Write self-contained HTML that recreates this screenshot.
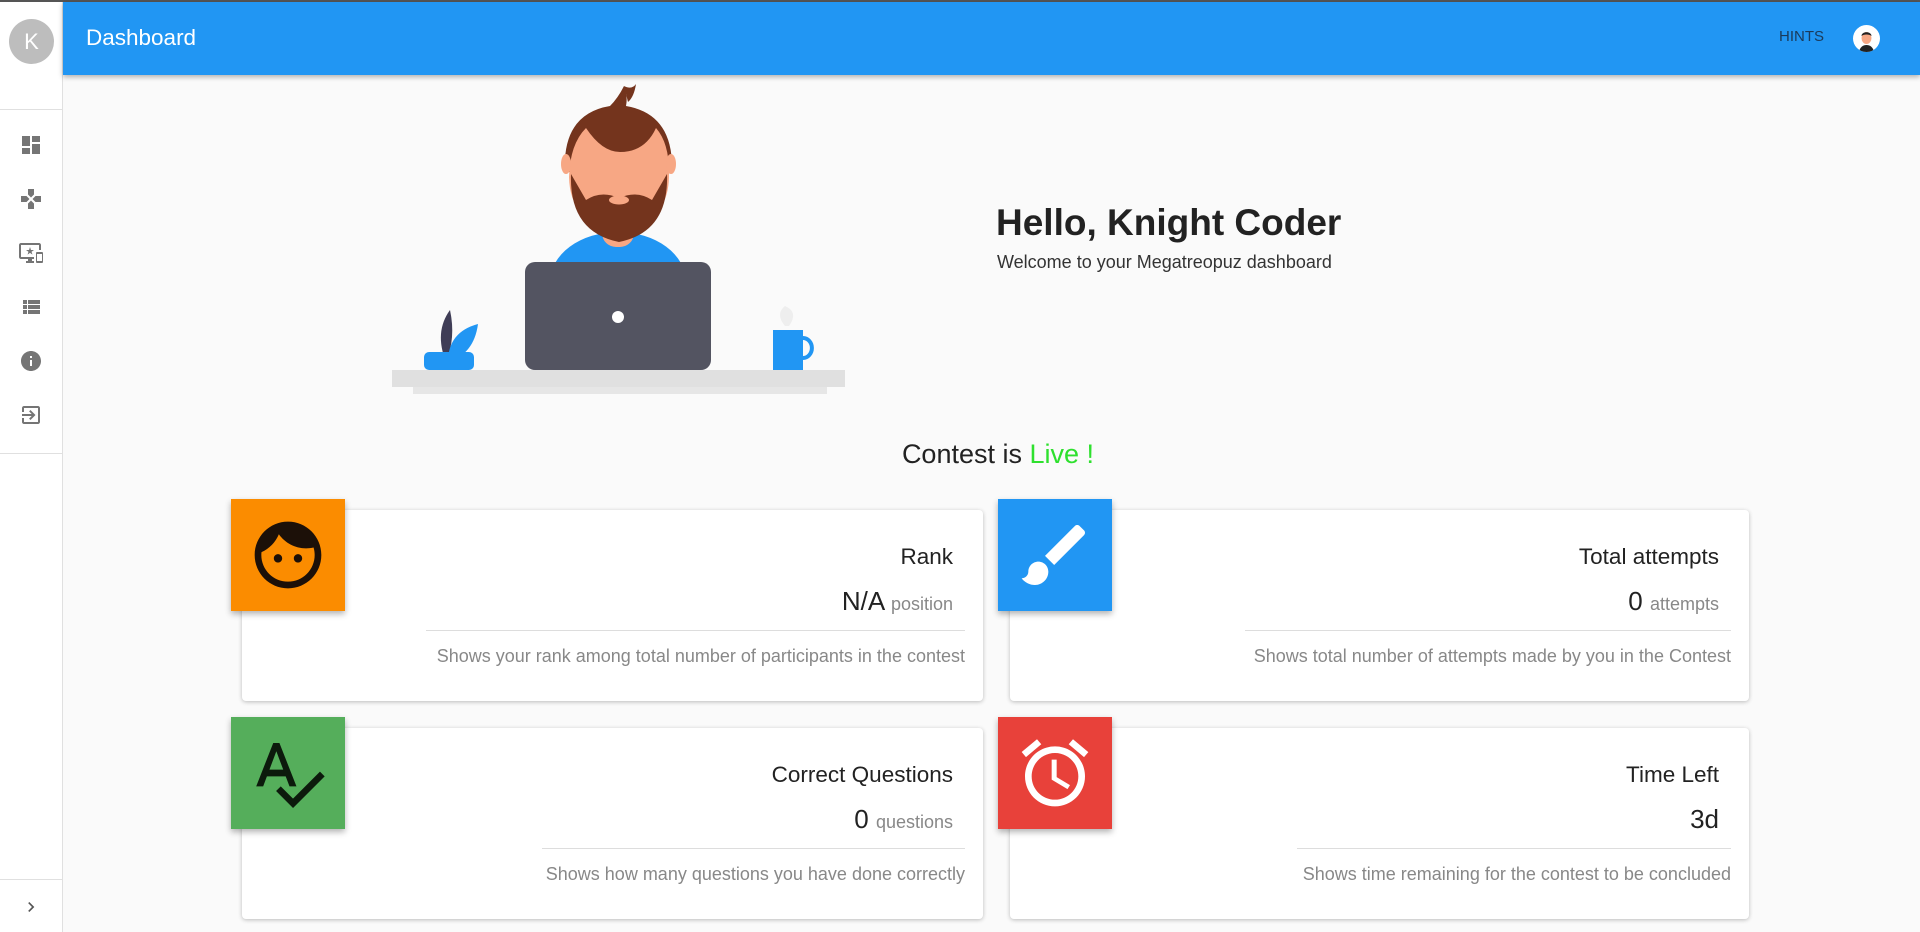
<!DOCTYPE html>
<html><head><meta charset="utf-8"><style>
*{margin:0;padding:0;box-sizing:border-box}
body{width:1920px;height:930px;overflow:hidden;background:#fafafa;font-family:"Liberation Sans",sans-serif;position:relative;border-top:2px solid #555}
.side{position:absolute;left:0;top:0;width:63px;height:930px;background:#fff;border-right:1px solid #e0e0e0}
.av{position:absolute;left:9px;top:17px;width:45px;height:45px;border-radius:50%;background:#bdbdbd;color:#fff;font-size:22px;text-align:center;line-height:45px}
.hr{position:absolute;left:0;width:63px;height:1px;background:#e0e0e0}
.si{position:absolute;left:19px;width:24px;height:24px;fill:#757575}
.top{position:absolute;left:63px;top:0;right:0;height:73px;background:#2196f3;box-shadow:0 2px 5px rgba(0,0,0,.3)}
.top .t{position:absolute;left:23px;top:23px;color:#fff;font-size:22.5px}
.hints{position:absolute;left:1779px;top:26px;font-size:15px;color:#1a3a5a}
.uav{position:absolute;left:1853px;top:23px;width:27px;height:27px;border-radius:50%;background:#fff;overflow:hidden}
.card{position:absolute;background:#fff;border-radius:4px;box-shadow:0 1px 4px rgba(0,0,0,.25)}
.sq{position:absolute;width:114px;height:112px;box-shadow:0 3px 6px rgba(0,0,0,.3)}
.sq svg{position:absolute;left:17px;top:16px;width:80px;height:80px}
.ct{position:absolute;right:30px;text-align:right;font-size:22.5px;color:#222}
.cv{position:absolute;right:30px;text-align:right;font-size:26px;color:#222}
.cv small{font-size:18px;color:#888}
.dv{position:absolute;right:18px;height:1px;background:#ddd}
.cd{position:absolute;right:18px;font-size:18px;color:#888;white-space:nowrap}
</style></head><body>
<div class="side">
<div class="av">K</div>
<div class="hr" style="top:107px"></div>
<svg class="si" style="top:131px" viewBox="0 0 24 24"><path d="M3 13h8V3H3v10zm0 8h8v-6H3v6zm10 0h8V11h-8v10zm0-18v6h8V3h-8z"/></svg>
<svg class="si" style="top:185px" viewBox="0 0 24 24"><path d="M15 7.5V2H9v5.5l3 3 3-3zM7.5 9H2v6h5.5l3-3-3-3zM9 16.5V22h6v-5.5l-3-3-3 3zM16.5 9l-3 3 3 3H22V9h-5.5z"/></svg>
<svg class="si" style="top:239px" viewBox="0 0 24 24"><path d="M23 11.01L18 11c-.55 0-1 .45-1 1v9c0 .55.45 1 1 1h5c.55 0 1-.45 1-1v-9c0-.55-.45-.99-1-.99zM23 20h-5v-7h5v7zM20 2H2C.89 2 0 2.89 0 4v12c0 1.1.89 2 2 2h7v2H7v2h8v-2h-2v-2h2v-2H2V4h18v5h2V4c0-1.11-.9-2-2-2zm-8.03 7L11 6l-.97 3H7l2.47 1.76-.94 2.91 2.47-1.8 2.47 1.8-.94-2.91L15 9h-3.03z"/></svg>
<svg class="si" style="top:293px" viewBox="0 0 24 24"><path d="M4 14h4v-4H4v4zm0 5h4v-4H4v4zM4 9h4V5H4v4zm5 5h12v-4H9v4zm0 5h12v-4H9v4zM9 5v4h12V5H9z"/></svg>
<svg class="si" style="top:347px" viewBox="0 0 24 24"><path d="M12 2C6.48 2 2 6.48 2 12s4.48 10 10 10 10-4.48 10-10S17.52 2 12 2zm1 15h-2v-6h2v6zm0-8h-2V7h2v2z"/></svg>
<svg class="si" style="top:401px" viewBox="0 0 24 24"><path d="M10.09 15.59L11.5 17l5-5-5-5-1.41 1.41L12.67 11H3v2h9.67l-2.58 2.59zM19 3H5c-1.11 0-2 .9-2 2v4h2V5h14v14H5v-4H3v4c0 1.1.89 2 2 2h14c1.1 0 2-.9 2-2V5c0-1.1-.9-2-2-2z"/></svg>
<div class="hr" style="top:451px"></div>
<div class="hr" style="top:877px"></div>
<svg style="position:absolute;left:21px;top:895px;width:20px;height:20px" viewBox="0 0 24 24"><path d="M10 6L8.59 7.41 13.17 12l-4.58 4.59L10 18l6-6z" fill="#555"/></svg>
</div>
<div class="top"><div class="t">Dashboard</div></div>
<div class="hints">HINTS</div>
<div class="uav"><svg viewBox="0 0 27 27" width="27" height="27"><path d="M6 27c1-5 4-7 7.5-7s6.5 2 7.5 7z" fill="#222"/><ellipse cx="13.5" cy="13" rx="5" ry="6" fill="#f7a784"/><path d="M8.5 11c0-5 10-5 10 0-2-2-8-2-10 0z" fill="#222"/></svg></div>

<svg style="position:absolute;left:380px;top:80px" width="480" height="320" viewBox="380 80 480 320">
<rect x="413" y="384" width="414" height="8" fill="#e6e6e6"/>
<rect x="392" y="368" width="453" height="17" fill="#e0e0e0"/>
<ellipse cx="618" cy="280" rx="68" ry="50" fill="#2196f3"/>
<rect x="602" y="200" width="32" height="45" rx="14" fill="#f7a784"/>
<path d="M565 170 Q562 112 610 104 Q618 96 624 84 Q628 94 626 104 Q674 112 672 170 Z" fill="#74341d"/>
<path d="M624 84 Q632 88 636 82 Q634 95 628 100 Z" fill="#74341d"/>
<path d="M569 175 Q570 142 586 126 Q602 150 620 150 Q645 150 656 126 Q670 142 669 175 Q668 222 618 226 Q570 222 569 175Z" fill="#f7a784"/>
<ellipse cx="566" cy="162" rx="5" ry="10" fill="#f7a784"/><ellipse cx="671" cy="162" rx="5" ry="10" fill="#f7a784"/>
<path d="M571 172 l15 26 q15 -10 33 -2 q18 -8 33 2 l15 -26 q2 58 -48 68 q-50 -10 -48 -68z" fill="#74341d"/>
<ellipse cx="619" cy="198" rx="10" ry="4.5" fill="#f7a784"/>
<rect x="525" y="260" width="186" height="108" rx="10" fill="#535461"/>
<ellipse cx="618" cy="315" rx="6" ry="6" fill="#fff"/>
<path d="M446 360 q-12 -30 4 -52 q6 28 -4 52z" fill="#3f3d56"/>
<path d="M448 360 q0 -30 30 -38 q-4 30 -30 38z" fill="#2196f3"/>
<rect x="424" y="350" width="50" height="18" rx="5" fill="#2196f3"/>
<rect x="773" y="328" width="30" height="40" fill="#2196f3"/>
<path d="M803 336 a8 9 0 0 1 0 20" fill="none" stroke="#2196f3" stroke-width="4"/>
<path d="M785 324 q-10 -12 0 -20 q14 6 4 20z" fill="#eee"/>
</svg>

<div style="position:absolute;left:996px;top:200px;font-size:37px;font-weight:bold;color:#222">Hello, Knight Coder</div>
<div style="position:absolute;left:997px;top:250px;font-size:18px;color:#333">Welcome to your Megatreopuz dashboard</div>
<div style="position:absolute;left:0;width:1996px;text-align:center;top:437px;font-size:27px;color:#222">Contest is <span style="color:#2ee02e">Live !</span></div>

<div class="card" style="left:242px;top:508px;width:741px;height:191px">
<div class="ct" style="top:34px">Rank</div>
<div class="cv" style="top:76px">N/A <small>position</small></div>
<div class="dv" style="top:120px;left:184px"></div>
<div class="cd" style="top:136px">Shows your rank among total number of participants in the contest</div>
</div>
<div class="sq" style="left:231px;top:497px;background:#fb8c00"><svg viewBox="0 0 24 24"><path fill="#1c1008" d="M9 11.75c-.69 0-1.25.56-1.25 1.25s.56 1.25 1.25 1.25 1.25-.56 1.25-1.25-.56-1.25-1.25-1.25zm6 0c-.69 0-1.25.56-1.25 1.25s.56 1.25 1.25 1.25 1.25-.56 1.25-1.25-.56-1.25-1.25-1.25zM12 2C6.48 2 2 6.48 2 12s4.48 10 10 10 10-4.48 10-10S17.52 2 12 2zm0 18c-4.41 0-8-3.59-8-8 0-.29.02-.58.05-.86 2.360-1.05 4.23-2.98 5.21-5.37C11.07 8.33 14.05 10 17.42 10c.78 0 1.53-.09 2.25-.26.21.71.33 1.47.33 2.26 0 4.41-3.59 8-8 8z"/></svg></div>

<div class="card" style="left:1010px;top:508px;width:739px;height:191px">
<div class="ct" style="top:34px">Total attempts</div>
<div class="cv" style="top:76px">0 <small>attempts</small></div>
<div class="dv" style="top:120px;left:235px"></div>
<div class="cd" style="top:136px">Shows total number of attempts made by you in the Contest</div>
</div>
<div class="sq" style="left:998px;top:497px;background:#2196f3"><svg viewBox="0 0 24 24"><path fill="#fff" d="M7 14c-1.66 0-3 1.34-3 3 0 1.31-1.16 2-2 2 .92 1.22 2.49 2 4 2 2.21 0 4-1.79 4-4 0-1.66-1.34-3-3-3zm13.71-9.37l-1.34-1.34c-.39-.39-1.02-.39-1.41 0L9 12.25 11.75 15l8.96-8.96c.39-.39.39-1.02 0-1.41z"/></svg></div>

<div class="card" style="left:242px;top:726px;width:741px;height:191px">
<div class="ct" style="top:34px">Correct Questions</div>
<div class="cv" style="top:76px">0 <small>questions</small></div>
<div class="dv" style="top:120px;left:300px"></div>
<div class="cd" style="top:136px">Shows how many questions you have done correctly</div>
</div>
<div class="sq" style="left:231px;top:715px;background:#55ae5b"><svg viewBox="0 0 24 24"><path fill="#0c1a0c" d="M12.45 16h2.09L9.43 3H7.57L2.46 16h2.09l1.12-3h5.64l1.14 3zm-6.02-5L8.5 5.48 10.57 11H6.43zm15.16.59l-8.09 8.09L9.83 16l-1.41 1.41 5.09 5.09L23 13l-1.41-1.41z"/></svg></div>

<div class="card" style="left:1010px;top:726px;width:739px;height:191px">
<div class="ct" style="top:34px">Time Left</div>
<div class="cv" style="top:76px">3d</div>
<div class="dv" style="top:120px;left:287px"></div>
<div class="cd" style="top:136px">Shows time remaining for the contest to be concluded</div>
</div>
<div class="sq" style="left:998px;top:715px;background:#e8413a"><svg viewBox="0 0 24 24"><path fill="#fff" d="M22 5.72l-4.6-3.86-1.29 1.53 4.6 3.86L22 5.72zM7.88 3.39L6.6 1.86 2 5.71l1.29 1.53 4.59-3.85zM12.5 8H11v6l4.75 2.85.75-1.23-4-2.37V8zM12 4c-4.97 0-9 4.03-9 9s4.02 9 9 9c4.97 0 9-4.03 9-9s-4.03-9-9-9zm0 16c-3.87 0-7-3.13-7-7s3.13-7 7-7 7 3.13 7 7-3.13 7-7 7z"/></svg></div>
</body></html>
